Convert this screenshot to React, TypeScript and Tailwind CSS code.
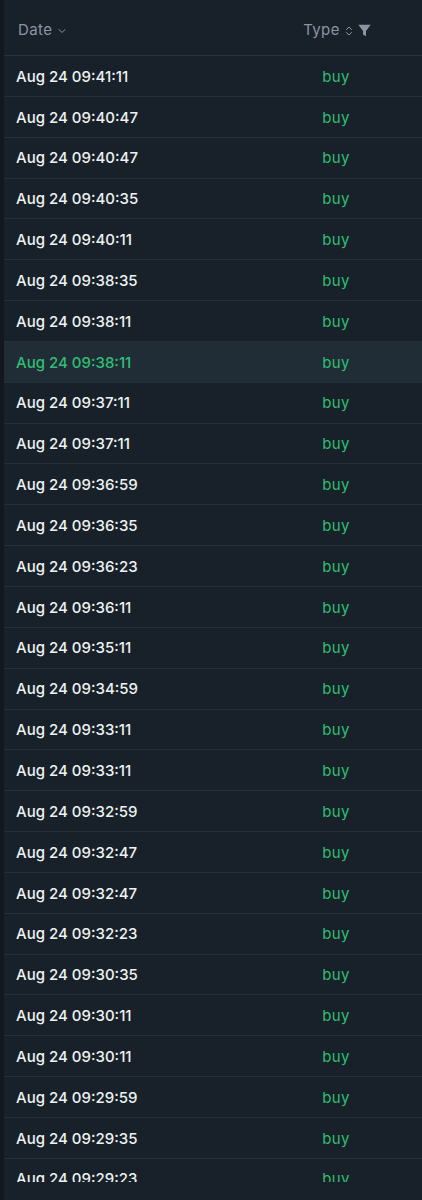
import { ChevronDown, ChevronsUpDown } from 'lucide-react';

const times = [
  '09:41:11', '09:40:47', '09:40:47', '09:40:35', '09:40:11', '09:38:35', '09:38:11',
  '09:38:11', '09:37:11', '09:37:11', '09:36:59', '09:36:35', '09:36:23', '09:36:11',
  '09:35:11', '09:34:59', '09:33:11', '09:33:11', '09:32:59', '09:32:47', '09:32:47',
  '09:32:23', '09:30:35', '09:30:11', '09:30:11', '09:29:59', '09:29:35', '09:29:23',
  '09:29:11',
];

export default function App() {
  return (
    <div
      className="w-full h-[1200px] bg-[#18212a] flex overflow-hidden"
      style={{ fontFamily: 'Inter, "Noto Sans", sans-serif' }}
    >
      <div className="w-1 shrink-0 bg-[#12181e]" />
      <div className="flex-1 flex flex-col">
        {/* Header */}
        <div className="h-[56px] shrink-0 flex items-center pt-[6px] border-b border-[#27313b] text-[15px] tracking-[0.4px] text-[#8b94a1]">
          <div className="flex-1 pl-[14px] flex items-center gap-1">
            <span>Date</span>
            <ChevronDown className="w-3 h-3" strokeWidth={2} />
          </div>
          <div className="w-[172px] flex items-center justify-center gap-[3px] pl-[2px]">
            <span>Type</span>
            <ChevronsUpDown className="w-3 h-3" strokeWidth={2} />
            <svg viewBox="0 0 12 12" className="w-[13px] h-[13px]" fill="currentColor">
              <path d="M0.3 0.8h11.4L7.4 6.4V11.4L4.6 9.8V6.4z" />
            </svg>
          </div>
        </div>
        {/* Rows */}
        <div className="h-[1126px] overflow-hidden flex flex-col">
          {times.map((t, i) => {
            const active = i === 7;
            return (
              <div
                key={i}
                className={`h-[40.85px] shrink-0 flex items-center pt-[2px] border-b border-[#252f38] text-[15px] ${
                  active ? 'bg-[#212d36]' : ''
                }`}
              >
                <div
                  className={`flex-1 pl-3 font-medium ${
                    active ? 'text-[#2fbf73]' : 'text-[#eef3f1]'
                  }`}
                >
                  Aug 24 {t}
                </div>
                <div className="w-[172px] text-center tracking-[0.3px] text-[#2fbf73]">buy</div>
              </div>
            );
          })}
        </div>
      </div>
    </div>
  );
}
